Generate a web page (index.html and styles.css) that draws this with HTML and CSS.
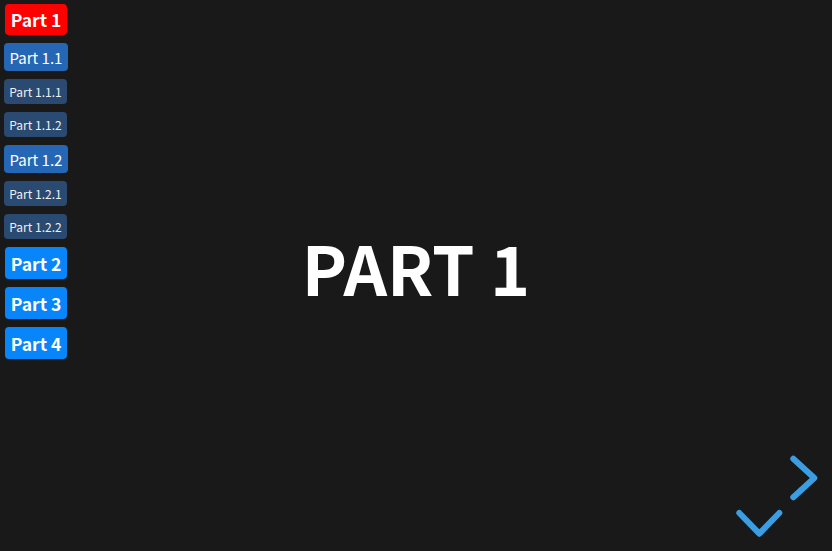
FILE: index.html
```html
<!DOCTYPE html>
<html lang="en">
<head>
<meta charset="utf-8">
<title>Slides</title>
<link rel="stylesheet" href="styles.css">
</head>
<body>
<div class="stage">
  <nav class="menu">
    <a class="item top current">Part 1</a>
    <a class="item sub">Part 1.1</a>
    <a class="item subsub">Part 1.1.1</a>
    <a class="item subsub">Part 1.1.2</a>
    <a class="item sub">Part 1.2</a>
    <a class="item subsub">Part 1.2.1</a>
    <a class="item subsub">Part 1.2.2</a>
    <a class="item top">Part 2</a>
    <a class="item top">Part 3</a>
    <a class="item top">Part 4</a>
  </nav>
  <h1 class="title">PART 1</h1>
  <div class="controls">
    <svg class="arrows" width="90" height="90" viewBox="0 0 90 90">
      <polyline points="61.3,6.7 82.3,26 61.3,45.3"/>
      <polyline points="7.3,61 27.3,81.7 47.3,61"/>
    </svg>
  </div>
</div>
</body>
</html>
```
FILE: styles.css
```css
html, body {
  margin: 0;
  padding: 0;
  height: 100%;
  background: #191919;
  font-family: "Noto Sans CJK JP", "Noto Sans", sans-serif;
}
.stage {
  display: grid;
  height: 100vh;
  overflow: hidden;
}
.stage > * {
  grid-area: 1 / 1;
}
.menu {
  align-self: start;
  justify-self: start;
  display: flex;
  flex-direction: column;
  gap: 8px;
  padding: 4px 0 0 4px;
  z-index: 2;
}
.item {
  display: flex;
  align-items: center;
  justify-content: center;
  color: #fff;
  border-radius: 4px;
  box-sizing: border-box;
  white-space: nowrap;
  cursor: pointer;
}
.top {
  width: 62px;
  height: 32px;
  margin-left: 1px;
  font-size: 17.5px;
  font-weight: bold;
  background: #0985fa;
}
.top.current {
  height: 31px;
  background: #ff0000;
}
.sub {
  width: 64px;
  height: 28px;
  font-size: 15px;
  background: #2567b4;
}
.subsub {
  width: 63px;
  height: 25px;
  font-size: 12px;
  background: #2a4a72;
  color: #f0f0f0;
}
.title {
  place-self: center;
  margin: 0 0 18px 0;
  color: #fff;
  font-size: 68px;
  font-weight: bold;
  line-height: 1;
  letter-spacing: 0;
}
.controls {
  align-self: end;
  justify-self: end;
  margin: 0 10px 9px 0;
  line-height: 0;
}
.arrows polyline {
  fill: none;
  stroke: #3b9de2;
  stroke-width: 6;
  stroke-linecap: round;
  stroke-linejoin: round;
}
```
